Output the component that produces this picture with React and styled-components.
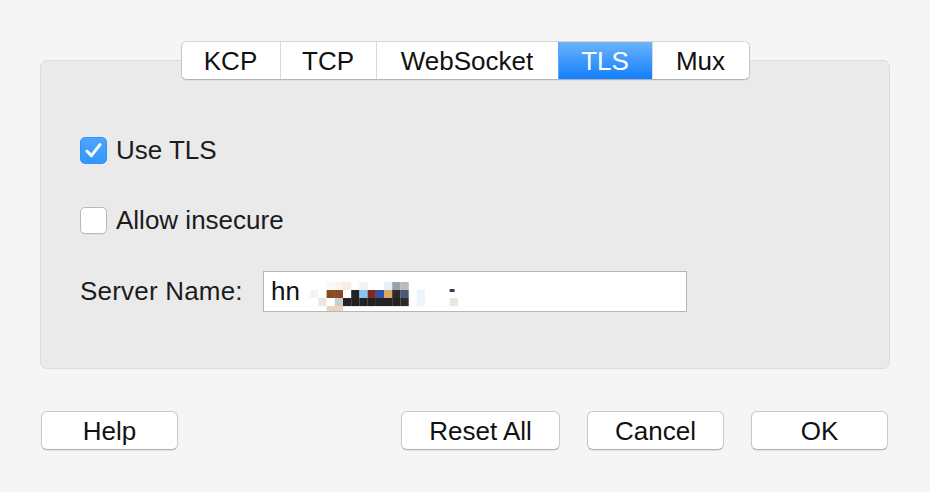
import React from "react";
import styled, { createGlobalStyle } from "styled-components";

const Global = createGlobalStyle`
  html, body { margin: 0; padding: 0; background: #f5f5f5; }
  body { font-family: "Liberation Sans", Arial, sans-serif; color: #1c1c1c; }
`;

const Window = styled.div`
  width: 930px;
  height: 492px;
  box-sizing: border-box;
  padding: 41px 40px 0 40px;
  background: #f5f5f5;
  display: flex;
  flex-direction: column;
`;

const TabRow = styled.div`
  display: flex;
  justify-content: center;
  position: relative;
  z-index: 1;
`;

const TabBar = styled.div`
  display: flex;
  height: 39px;
  box-sizing: border-box;
  background: #fff;
  border: 1px solid #c6c6c6;
  border-top-color: #d4d4d4;
  border-bottom-color: #b4b4b4;
  border-radius: 6px;
  overflow: hidden;
  box-shadow: 0 1px 1px rgba(0, 0, 0, 0.06);
`;

const Tab = styled.div`
  width: ${(p) => p.$w}px;
  box-sizing: border-box;
  display: flex;
  align-items: center;
  justify-content: center;
  padding-top: 1px;
  font-size: 26px;
  color: ${(p) => (p.$active ? "#ffffff" : "#111")};
  background: ${(p) =>
    p.$active ? "linear-gradient(to bottom, #6cb4fb, #117efc)" : "#fff"};
  border-left: ${(p) => (p.$first ? "none" : "1px solid #dadada")};
  ${(p) => p.$active && "border-left-color: #5aa6f8;"}
`;

const Panel = styled.div`
  margin-top: -20px;
  height: 309px;
  box-sizing: border-box;
  background: #eaeaea;
  border: 1px solid #dcdcdc;
  border-radius: 7px;
  padding: 76px 0 0 39px;
  display: flex;
  flex-direction: column;
`;

const CheckRow = styled.label`
  display: flex;
  align-items: center;
  gap: 9px;
  height: 27px;
  font-size: 26px;
  margin-bottom: ${(p) => p.$mb}px;
`;

const Box = styled.span`
  width: 27px;
  height: 27px;
  box-sizing: border-box;
  border-radius: 5px;
  display: flex;
  align-items: center;
  justify-content: center;
  background: ${(p) => (p.$checked ? "linear-gradient(#4da5fd, #3396fb)" : "#fff")};
  border: 1px solid ${(p) => (p.$checked ? "#3491f5" : "#b8b8b8")};
  box-shadow: ${(p) => (p.$checked ? "none" : "0 1px 0 rgba(0,0,0,0.04)")};
`;

const FieldRow = styled.div`
  display: flex;
  align-items: center;
  height: 41px;
`;

const FieldLabel = styled.span`
  font-size: 26px;
  width: 183px;
  letter-spacing: 0.2px;
`;

const Input = styled.div`
  position: relative;
  width: 424px;
  height: 41px;
  box-sizing: border-box;
  background: #fff;
  border: 1px solid #b6b6b6;
  display: flex;
  align-items: center;
  padding-left: 7px;
  font-size: 26px;
  color: #111;
  overflow: hidden;
`;

const Mosaic = styled.svg`
  position: absolute;
  left: 38px;
  top: 10px;
`;

const Footer = styled.div`
  display: flex;
  align-items: center;
  margin: 42px 2px 0 1px;
  gap: 27px;
`;

const Button = styled.button`
  width: ${(p) => p.$w}px;
  height: 39px;
  box-sizing: border-box;
  background: #fff;
  border: 1px solid #c9c9c9;
  border-bottom-color: #b2b2b2;
  border-radius: 6px;
  box-shadow: 0 1px 1px rgba(0, 0, 0, 0.08);
  font-family: "Liberation Sans", Arial, sans-serif;
  font-size: 26px;
  color: #111;
  padding: 1px 0 0;
  ${(p) => p.$push && "margin-left: auto;"}
`;

const cells = [
  [-2, 0, "#ffffff"], [-1, 0, "#ffffff"], [-2, 1, "#ffffff"], [-1, 1, "#f4f4f4"], [-2, 2, "#ffffff"], [-1, 2, "#ffffff"],
  [0, 0, "#ffffff"], [1, 0, "#fdf8f2"], [2, 0, "#fbf4ea"],
  [3, 0, "#f7ece0"], [5, 0, "#eef3f8"], [8, 0, "#e6f2fb"], [9, 0, "#9aa4a4"], [10, 0, "#b9bcbc"],
  [0, 1, "#ffffff"], [1, 1, "#8a4a26"], [2, 1, "#8a4a26"], [3, 1, "#ffffff"], [4, 1, "#232323"],
  [5, 1, "#8ac6ee"], [6, 1, "#7b2b21"], [7, 1, "#2c55a6"], [8, 1, "#dfa766"], [9, 1, "#2b2b2b"],
  [10, 1, "#4a5a78"], [12, 1, "#eef5fa"],
  [0, 2, "#e9e6df"], [1, 2, "#ffffff"], [2, 2, "#c9ced2"], [3, 2, "#242424"], [4, 2, "#202020"],
  [5, 2, "#222222"], [6, 2, "#222222"], [7, 2, "#232323"], [8, 2, "#222222"], [9, 2, "#222222"],
  [10, 2, "#2a2a2a"], [12, 2, "#f1f5f9"], [16, 2, "#e6e6e6"],
  [1, 3, "#ecd3b9"], [2, 3, "#ecd3b9"],
];

export default function App() {
  const tabs = [
    ["KCP", 98],
    ["TCP", 96],
    ["WebSocket", 182],
    ["TLS", 94],
    ["Mux", 97],
  ];
  return (
    <>
      <Global />
      <Window>
        <TabRow>
          <TabBar>
            {tabs.map(([t, w], i) => (
              <Tab key={t} $w={w} $first={i === 0} $active={t === "TLS"}>
                {t}
              </Tab>
            ))}
          </TabBar>
        </TabRow>
        <Panel>
          <CheckRow $mb={43}>
            <Box $checked>
              <svg width="19" height="17" viewBox="0 0 19 17">
                <path d="M3 9.2 L7.4 13.6 L16 2.6" fill="none" stroke="#fff" strokeWidth="3" strokeLinecap="round" strokeLinejoin="round" />
              </svg>
            </Box>
            Use TLS
          </CheckRow>
          <CheckRow $mb={37}>
            <Box />
            Allow insecure
          </CheckRow>
          <FieldRow>
            <FieldLabel>Server Name:</FieldLabel>
            <Input>
              hn
              <Mosaic width="160" height="34" viewBox="0 0 160 34">
                {cells.map(([c, r, col], i) => (
                  <rect key={i} x={(c + 2) * 8.2} y={r * 8} width="8.3" height="8.1" fill={col} />
                ))}
                <rect x={(16 + 2) * 8.2} y="7" width="5" height="3" fill="#3b3b5c" />
              </Mosaic>
            </Input>
          </FieldRow>
        </Panel>
        <Footer>
          <Button $w={137}>Help</Button>
          <Button $w={159} $push>Reset All</Button>
          <Button $w={137}>Cancel</Button>
          <Button $w={137}>OK</Button>
        </Footer>
      </Window>
    </>
  );
}
